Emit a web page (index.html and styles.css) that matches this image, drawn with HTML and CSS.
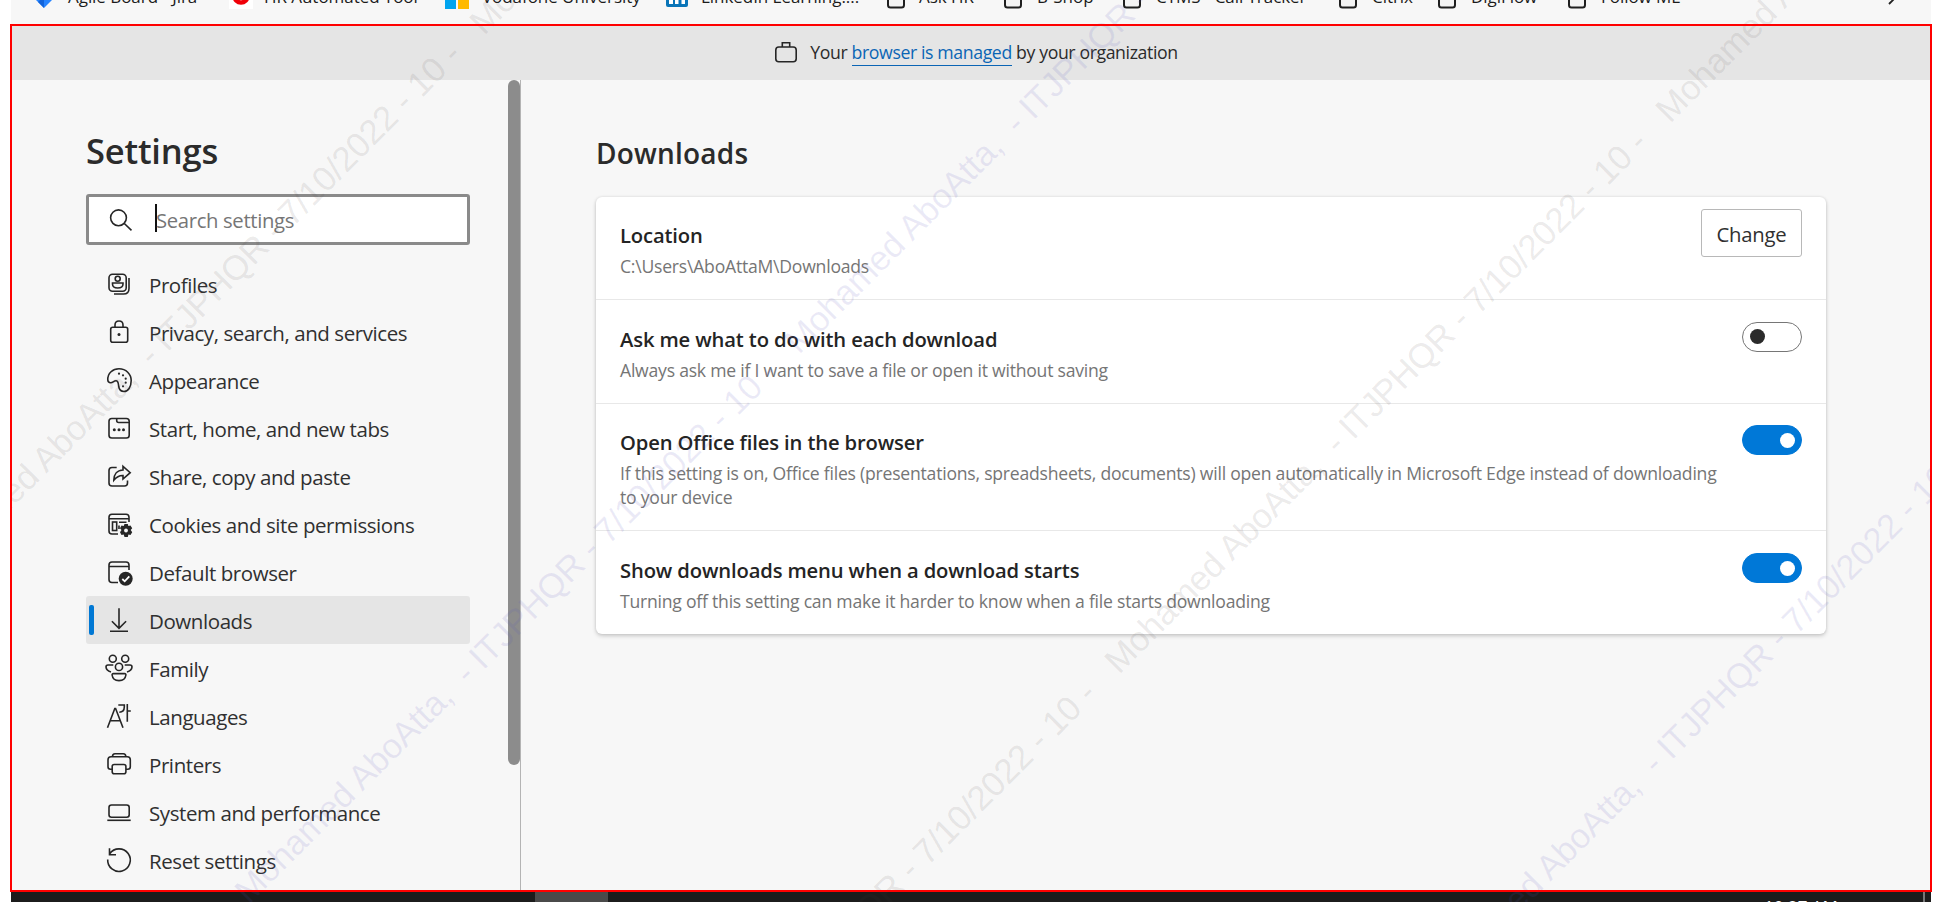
FILE: index.html
```html
<!DOCTYPE html>
<html lang="en">
<head>
<meta charset="utf-8">
<title>Settings - Downloads</title>
<link rel="stylesheet" href="styles.css">
</head>
<body>
<div class="screen">
  <div class="bookmarks">
    <div class="bm bm-jira"><svg width="20" height="26" viewBox="0 0 20 26"><path d="M0 16L10 6L20 16L10 26Z" fill="#2684ff"/><path d="M10 14V26L4 20Z" fill="#1264db"/></svg><span>Agile Board - Jira</span></div>
    <div class="bm bm-voda"><svg width="24" height="26" viewBox="0 0 24 26"><rect width="24" height="26" fill="#fff"/><circle cx="12" cy="13" r="6.500" fill="none" stroke="#f00008" stroke-width="4.500"/></svg><span>HR Automated Tool</span></div>
    <div class="bm bm-ms"><svg width="24" height="26" viewBox="0 0 24 26"><path d="M0 2H11V13H0Z" fill="#f25022"/><path d="M13 2H24V13H13Z" fill="#7fba00"/><path d="M0 15H11V26H0Z" fill="#00a4ef"/><path d="M13 15H24V26H13Z" fill="#ffb900"/></svg><span>Vodafone University</span></div>
    <div class="bm bm-in"><svg width="22" height="26" viewBox="0 0 22 26"><rect y="2" width="22" height="22" rx="2" fill="#0a75b8"/><path d="M3 10H7V21H3ZM9 10H12.500V21H9ZM15.500 14H19V21H15.500Z" fill="#fff"/></svg><span>LinkedIn Learning:...</span></div>
    <div class="bm bm-ask"><svg class="folder" width="18" height="26" viewBox="0 0 18 26"><rect x="1" y="6" width="16" height="18.500" rx="2.500"/></svg><span>Ask HR</span></div>
    <div class="bm bm-shop"><svg class="folder" width="18" height="26" viewBox="0 0 18 26"><rect x="1" y="6" width="16" height="18.500" rx="2.500"/></svg><span>B-Shop</span></div>
    <div class="bm bm-ctms"><svg class="folder" width="18" height="26" viewBox="0 0 18 26"><rect x="1" y="6" width="16" height="18.500" rx="2.500"/></svg><span>CTMS - Call Tracker</span></div>
    <div class="bm bm-citrix"><svg class="folder" width="18" height="26" viewBox="0 0 18 26"><rect x="1" y="6" width="16" height="18.500" rx="2.500"/></svg><span>Citrix</span></div>
    <div class="bm bm-digi"><svg class="folder" width="18" height="26" viewBox="0 0 18 26"><rect x="1" y="6" width="16" height="18.500" rx="2.500"/></svg><span>DigiFlow</span></div>
    <div class="bm bm-follow"><svg class="folder" width="18" height="26" viewBox="0 0 18 26"><rect x="1" y="6" width="16" height="18.500" rx="2.500"/></svg><span>Follow ME</span></div>
    <svg class="more" width="10" height="22" viewBox="0 0 10 22"><path d="M1 6L8.500 13.500L1 21" fill="none" stroke="#222" stroke-width="1.800"/></svg>
  </div>

  <div class="window">
    <div class="banner">
      <svg width="24" height="24" viewBox="0 0 24 24"><rect x="1.800" y="7" width="20.400" height="14.800" rx="3"/><path d="M8.300 7V2.800H15.700V7"/></svg>
      <p>Your <a>browser is managed</a> by your organization</p>
    </div>
    <div class="body">
      <aside class="sidebar">
        <h1>Settings</h1>
        <div class="search">
          <svg width="24" height="24" viewBox="0 0 24 24"><circle cx="9.500" cy="9.800" r="7.900"/><path d="M15.300 15.500L22.500 22.300"/></svg>
          <i class="caret"></i><span>Search settings</span>
        </div>
        <nav>
          <div class="item"><svg viewBox="0 0 28 28"><rect x="4" y="4.200" width="17.200" height="17" rx="3.500"/><path d="M24 8V18.500Q24 24 18.500 24H9"/><circle cx="12.700" cy="8.800" r="2.500"/><path d="M7.500 13H18V14Q18 18 12.700 18Q7.500 18 7.500 14Z"/></svg><span>Profiles</span></div>
          <div class="item"><svg viewBox="0 0 28 28"><rect x="5.700" y="9.200" width="17" height="15" rx="2"/><path d="M10 9V7Q10 3 14 3T18 7V9"/><circle class="dot" cx="14" cy="16.500" r="1.500"/></svg><span>Privacy, search, and services</span></div>
          <div class="item"><svg viewBox="0 0 28 28"><path d="M2.800 14C2.500 7 8 2.800 14 2.800C21 2.800 26.200 8 26.200 14.500C26.200 21 23 25.500 19 25.500C16 25.500 14.300 24 13.700 20.500C13.300 17.500 13.500 14.800 11 14.800C8.500 14.800 7.500 17.300 5.200 16.700C3.300 16.200 2.800 15.300 2.800 14Z"/><g class="dot"><circle cx="14" cy="7.700" r="1.100"/><circle cx="18" cy="9.300" r="1.100"/><circle cx="20.700" cy="12.700" r="1.100"/><circle cx="20.700" cy="16.700" r="1.100"/><circle cx="18" cy="20.300" r="1.100"/></g></svg><span>Appearance</span></div>
          <div class="item"><svg viewBox="0 0 28 28"><rect x="4" y="4.500" width="20.200" height="19.500" rx="2.800"/><path d="M11.700 4.500V6.500Q11.700 8.500 13.700 8.500H24"/><g class="dot"><circle cx="9.300" cy="15.700" r="1.500"/><circle cx="14" cy="15.700" r="1.500"/><circle cx="18.500" cy="15.700" r="1.500"/></g></svg><span>Start, home, and new tabs</span></div>
          <div class="item"><svg viewBox="0 0 28 28"><path d="M11.700 5.500H7Q4 5.500 4 8.500V21Q4 24 7 24H19.500Q22.500 24 22.500 21V18.500"/><path d="M18 4.300L25.200 10.700L18 17V13.500C14 13.300 11.500 15 8.800 18.300C8.800 12.500 12 8.300 18 8Z"/></svg><span>Share, copy and paste</span></div>
          <div class="item"><svg viewBox="0 0 28 28"><path d="M13 24H7Q4 24 4 21V7.300Q4 4.300 7 4.300H21Q24 4.300 24 7.300V12M4 8.700H24"/><rect x="7.500" y="12" width="4.200" height="8.500"/><path d="M14 12.200H21.500M14 15.500V19"/><path class="dot" d="M19.500 14H22.800L23.400 16L25.500 15.500L27.200 18.300L25.700 20L27.200 22.300L25.500 25L23.400 24.500L22.800 27H19.500L18.700 24.500L16.500 25L15 22.300L16.500 20L15 18.300L16.500 15.500L18.700 16Z"/><circle class="hole" cx="21" cy="20.500" r="1.900"/></svg><span>Cookies and site permissions</span></div>
          <div class="item"><svg viewBox="0 0 28 28"><path d="M13 24.500H7Q4 24.500 4 21.500V7Q4 4 7 4H21Q24 4 24 7V12M4 8.500H24"/><circle class="dot" cx="20.700" cy="20.700" r="7"/><path class="tick" d="M17.300 21L19.700 23.300L24.300 18.300"/></svg><span>Default browser</span></div>
          <div class="item active"><svg viewBox="0 0 28 28"><path d="M14 2.300V22M6.900 15.200L14 22.300L21.100 15.200M5 25.300H23"/></svg><span>Downloads</span></div>
          <div class="item"><svg viewBox="0 0 28 28"><circle cx="7.800" cy="4.700" r="3.500"/><circle cx="20.200" cy="4.700" r="3.500"/><circle cx="14" cy="12.900" r="3.600"/><path d="M8.300 11H3Q1 11 1 13Q1.200 16.500 6 18M19.700 11H25Q27 11 27 13Q26.800 16.500 22 18M8.300 19.600H19.700Q21 19.600 20.900 21Q20.200 26.600 14 26.600T7.100 21Q7 19.600 8.300 19.600Z"/></svg><span>Family</span></div>
          <div class="item"><svg viewBox="0 0 28 28"><path d="M2.500 25.700L9.800 6.500H10.600L18 25.700M5.300 18.700H15.200M13.300 3H19.300V5Q19.300 10 14.300 10.200M22.300 2V19.700M22.300 9H25.800"/></svg><span>Languages</span></div>
          <div class="item"><svg viewBox="0 0 28 28"><path d="M7 19.200H5.500Q3 19.200 3 16.700V9.700Q3 6.700 6 6.700H22.300Q25.300 6.700 25.300 9.700V16.700Q25.300 19.200 22.800 19.200H21M7.500 6.500Q7.500 3.700 10 3.700H18.300Q20.800 3.700 20.800 6.500"/><rect x="7.200" y="14.500" width="13.700" height="9.300" rx="2"/></svg><span>Printers</span></div>
          <div class="item"><svg viewBox="0 0 28 28"><rect x="4" y="7" width="20.200" height="12.300" rx="2.500"/><path d="M2.300 22.300H25.700"/></svg><span>System and performance</span></div>
          <div class="item"><svg viewBox="0 0 28 28"><path d="M4.700 7.700A11.300 11.300 0 1 1 2.700 13.500M4.500 2.300V8.800H11"/></svg><span>Reset settings</span></div>
        </nav>
        <div class="scroll"></div>
      </aside>
      <main>
        <h2>Downloads</h2>
        <section class="card">
          <div class="row r1"><div><h3>Location</h3><p class="path">C:\Users\AboAttaM\Downloads</p></div><button>Change</button></div>
          <div class="row r2"><div><h3>Ask me what to do with each download</h3><p>Always ask me if I want to save a file or open it without saving</p></div><span class="toggle"><i></i></span></div>
          <div class="row r3"><div><h3>Open Office files in the browser</h3><p>If this setting is on, Office files (presentations, spreadsheets, documents) will open automatically in Microsoft Edge instead of downloading<br>to your device</p></div><span class="toggle on"><i></i></span></div>
          <div class="row r4"><div><h3>Show downloads menu when a download starts</h3><p>Turning off this setting can make it harder to know when a file starts downloading</p></div><span class="toggle on"><i></i></span></div>
        </section>
      </main>
    </div>
  </div>

  <div class="taskbar"><i class="task"></i><span class="clock">10:27 AM</span><i class="peek"></i></div>

  <svg class="marks" width="1920" height="902" viewBox="11 0 1920 902">
    <g class="gray">
      <text transform="translate(-67 587) rotate(-45)" textLength="750">Mohamed AboAtta,&#160; - ITJPHQR - 7/10/2022 - 10 -</text>
      <text transform="translate(484 36) rotate(-45)">Mohamed</text>
      <text transform="translate(568 1226) rotate(-45)" textLength="750">Mohamed AboAtta,&#160; - ITJPHQR - 7/10/2022 - 10 -</text>
      <text transform="translate(1119 675) rotate(-45)" textLength="750">Mohamed AboAtta,&#160; - ITJPHQR - 7/10/2022 - 10 -</text>
      <text transform="translate(1670 124) rotate(-45)">Mohamed AboAtta,</text>
    </g>
    <g class="violet">
      <text transform="translate(249 905) rotate(-45)" textLength="750">Mohamed AboAtta,&#160; - ITJPHQR - 7/10/2022 - 10 -</text>
      <text transform="translate(799 355) rotate(-45)" textLength="750">Mohamed AboAtta,&#160; - ITJPHQR - 7/10/2022 - 10 -</text>
      <text transform="translate(1437 995) rotate(-45)" textLength="750">Mohamed AboAtta,&#160; - ITJPHQR - 7/10/2022 - 10 -</text>
    </g>
  </svg>
</div>
</body>
</html>
```
FILE: styles.css
```css
* { box-sizing: border-box; }
body { margin: 0; background: #fff; color: #2b2b2b; font-family: "Open Sans", "Noto Sans", sans-serif; overflow: hidden; }
h1, h2, h3, p { margin: 0; }
h1, h2, h3 { font-weight: 600; white-space: nowrap; }
svg { flex: none; fill: none; stroke: #262626; stroke-width: 1.6; }
.screen { position: relative; width: 1920px; height: 902px; margin-left: 11px; background: #f7f7f7; }

.bookmarks { display: flex; height: 24px; overflow: hidden; font-size: 17px; line-height: 24px; color: #1b1b1b; }
.bookmarks svg { stroke: none; margin-top: -17px; }
.bookmarks .folder { stroke: #1f1f1f; stroke-width: 2; }
.bookmarks .folder rect { fill: #f4f4f4; }
.bm { display: flex; flex: none; white-space: nowrap; }
.bm span { margin-top: -15px; letter-spacing: -0.05px; }
.bm-jira { width: 195px; padding-left: 23px; gap: 14px; }
.bm-jira svg { margin-top: -18px; }
.bm-voda { width: 216px; margin-left: 23px; gap: 11px; }
.bm-ms { width: 221px; gap: 13px; }
.bm-in { width: 221px; gap: 13px; }
.bm-ask { width: 117px; gap: 14px; }
.bm-shop { width: 119px; gap: 15px; }
.bm-ctms { width: 216px; gap: 15px; }
.bm-citrix { width: 99px; gap: 15px; }
.bm-digi { width: 130px; gap: 15px; }
.bm-follow { width: 320px; gap: 15px; }

.window { position: relative; width: 1920px; height: 868px; }
.window::after { content: ""; position: absolute; inset: 0 -1px 0 -1px; border: 2px solid #f00; z-index: 4; }
.banner { display: flex; justify-content: center; gap: 12px; height: 56px; padding: 16px 0 0 10px; background: #e5e5e5; font-size: 17.7px; }
.banner p { line-height: 24px; letter-spacing: -0.39px; white-space: nowrap; }
.banner a { display: inline-block; height: 26px; color: #0b65b5; border-bottom: 1px solid #0b65b5; }
.body { display: flex; height: 812px; }

.sidebar { position: relative; width: 510px; flex: none; border-right: 1px solid #b4b4b4; padding: 44px 50px 0 75px; overflow: hidden; }
h1 { font-size: 34.5px; line-height: 54px; letter-spacing: -0.2px; }
.search { display: flex; align-items: center; margin-top: 16px; height: 51px; border: 3px solid #8a8a8a; border-radius: 3px; background: #fff; padding-left: 20px; color: #767676; font-size: 20.3px; }
.caret { width: 2px; height: 28px; margin: -3px 0 0 22px; background: #111; }
.search span { letter-spacing: -0.35px; margin-left: -1px; }
nav { margin-top: 15px; }
.item { display: flex; align-items: center; height: 48px; padding-left: 19px; border-radius: 3px; font-size: 20.5px; letter-spacing: -0.42px; white-space: nowrap; color: #303030; }
.item span { padding-top: 2px; }
.item svg { width: 28px; height: 28px; margin-right: 16px; }
.item .dot { fill: #262626; stroke: none; }
.item .hole { fill: #f7f7f7; stroke: none; }
.item .tick { stroke: #fff; stroke-width: 1.8; }
.active { position: relative; background: #e5e5e5; }
.active::before { content: ""; position: absolute; left: 3px; top: 9px; width: 5px; height: 30px; border-radius: 2px; background: #0078d4; }
.scroll { position: absolute; right: 0; top: 0; width: 12px; height: 685px; border-radius: 6px; background: #8c8c8c; }

main { flex: 1; padding: 53px 105px 0 75px; }
h2 { font-size: 28px; line-height: 40px; letter-spacing: 0.2px; }
.card { margin-top: 24px; height: 437px; background: #fff; border-radius: 6px; box-shadow: 0 2px 4px rgba(0,0,0,.18), 0 0 3px rgba(0,0,0,.1); }
.row { display: flex; justify-content: space-between; align-items: flex-start; padding: 22px 24px 0; border-bottom: 1px solid #e8e8e8; }
.r1 { height: 103px; }
.r2 { height: 104px; padding-top: 23px; }
.r3 { height: 127px; }
.r4 { height: 103px; border: 0; padding-top: 23px; }
h3 { font-size: 20.2px; line-height: 32px; letter-spacing: -0.13px; color: #242424; }
.row p { font-size: 17.6px; line-height: 24px; padding-top: 3px; letter-spacing: -0.23px; color: #757575; white-space: nowrap; }
button { width: 101px; height: 48px; margin-top: -10px; padding: 2px 0 0; border: 1px solid #b8b8b8; border-radius: 3px; background: #fff; font: 20.3px "Open Sans", sans-serif; letter-spacing: -0.2px; color: #303030; }
.toggle { width: 60px; height: 30px; margin-top: -1px; padding: 6px 7px; border: 1px solid #767676; border-radius: 15px; flex: none; }
.toggle i { display: block; width: 15px; height: 15px; border-radius: 50%; background: #2b2b2b; }
.toggle.on { border-color: #0078d7; background: #0078d7; }
.toggle.on i { margin: 1px -1px 0 auto; background: #fff; }

.taskbar { display: flex; height: 10px; background: #1c1c1c; overflow: hidden; }
.task { width: 73px; margin-left: 524px; background: #4a4a4a; }
.clock { margin: 3px 0 0 1156px; width: 159px; font-size: 17px; line-height: 24px; color: #fff; }
.peek { width: 2px; background: #777; }

.marks { position: absolute; left: 0; top: 0; overflow: hidden; z-index: 3; stroke: none; font: 34.65px "Liberation Sans", Arial, sans-serif; pointer-events: none; }
.gray { fill: rgba(70,60,60,.11); }
.violet { fill: rgba(90,85,190,.12); }
```
